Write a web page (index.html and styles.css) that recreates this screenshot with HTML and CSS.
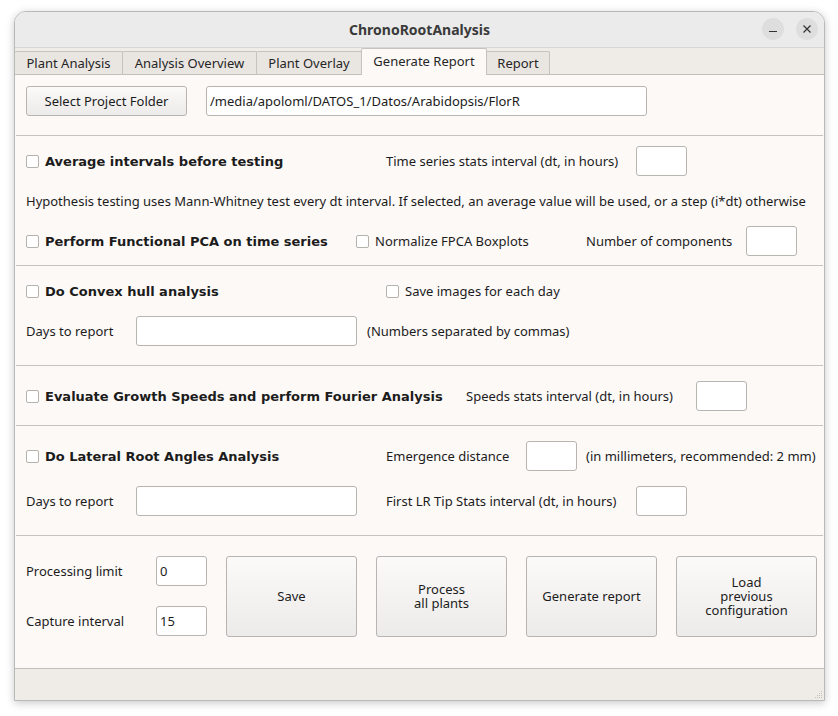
FILE: index.html
```html
<!DOCTYPE html>
<html>
<head>
<meta charset="utf-8">
<link rel="stylesheet" href="styles.css">
</head>
<body>
<div class="window">
  <div class="titlebar">
    <span class="title">ChronoRootAnalysis</span>
    <div class="wbtns">
      <span class="wbtn"><svg width="10" height="10" viewBox="0 0 10 10"><path d="M1 7.5h8" stroke="#333" stroke-width="1.2"/></svg></span>
      <span class="wbtn"><svg width="10" height="10" viewBox="0 0 10 10"><path d="M1.5 1.5l7 7M8.5 1.5l-7 7" stroke="#333" stroke-width="1.2"/></svg></span>
    </div>
  </div>
  <div class="tabbar">
    <span class="tab t1">Plant Analysis</span>
    <span class="tab t2">Analysis Overview</span>
    <span class="tab t3">Plant Overlay</span>
    <span class="tab active t4">Generate Report</span>
    <span class="tab t5">Report</span>
  </div>
  <div class="pane">
    <div class="sec s1">
      <div class="row">
        <button class="btn folder">Select Project Folder</button>
        <div class="input path">/media/apoloml/DATOS_1/Datos/Arabidopsis/FlorR</div>
      </div>
    </div>
    <div class="hr"></div>
    <div class="sec s2">
      <div class="row">
        <label class="chk w360"><span class="box"></span><b>Average intervals before testing</b></label>
        <span class="lbl w250">Time series stats interval (dt, in hours)</span>
        <div class="input small"></div>
      </div>
      <div class="row">
        <span class="lbl">Hypothesis testing uses Mann-Whitney test every dt interval. If selected, an average value will be used, or a step (i*dt) otherwise</span>
      </div>
      <div class="row">
        <label class="chk w330"><span class="box"></span><b>Perform Functional PCA on time series</b></label>
        <label class="chk w230"><span class="box"></span><span>Normalize FPCA Boxplots</span></label>
        <span class="lbl w160">Number of components</span>
        <div class="input small"></div>
      </div>
    </div>
    <div class="hr"></div>
    <div class="sec s3">
      <div class="row">
        <label class="chk w360"><span class="box"></span><b>Do Convex hull analysis</b></label>
        <label class="chk"><span class="box"></span><span>Save images for each day</span></label>
      </div>
      <div class="row">
        <span class="lbl w110">Days to report</span>
        <div class="input wide"></div>
        <span class="lbl ml10">(Numbers separated by commas)</span>
      </div>
    </div>
    <div class="hr"></div>
    <div class="sec s4">
      <div class="row">
        <label class="chk w440"><span class="box"></span><b>Evaluate Growth Speeds and perform Fourier Analysis</b></label>
        <span class="lbl w230">Speeds stats interval (dt, in hours)</span>
        <div class="input small"></div>
      </div>
    </div>
    <div class="hr"></div>
    <div class="sec s5">
      <div class="row">
        <label class="chk w360"><span class="box"></span><b>Do Lateral Root Angles Analysis</b></label>
        <span class="lbl w140">Emergence distance</span>
        <div class="input small"></div>
        <span class="lbl ml9">(in millimeters, recommended: 2 mm)</span>
      </div>
      <div class="row">
        <span class="lbl w110">Days to report</span>
        <div class="input wide"></div>
        <span class="lbl w250 ml29">First LR Tip Stats interval (dt, in hours)</span>
        <div class="input small"></div>
      </div>
    </div>
    <div class="hr"></div>
    <div class="sec s6">
      <div class="limits">
        <div class="row">
          <span class="lbl w130">Processing limit</span>
          <div class="input small val">0</div>
        </div>
        <div class="row">
          <span class="lbl w130">Capture interval</span>
          <div class="input small val">15</div>
        </div>
      </div>
      <button class="btn big"><span class="bl">Save</span></button>
      <button class="btn big"><span class="bl">Process</span><span class="bl">all plants</span></button>
      <button class="btn big"><span class="bl">Generate report</span></button>
      <button class="btn big last"><span class="bl">Load</span><span class="bl">previous</span><span class="bl">configuration</span></button>
    </div>
  </div>
  <div class="statusbar">
    <svg class="grip" width="10" height="10" viewBox="0 0 10 10" fill="#c4c0bc">
      <rect x="8" y="2" width="1" height="1"/><rect x="6" y="4" width="1" height="1"/><rect x="8" y="4" width="1" height="1"/>
      <rect x="4" y="6" width="1" height="1"/><rect x="6" y="6" width="1" height="1"/><rect x="8" y="6" width="1" height="1"/>
      <rect x="2" y="8" width="1" height="1"/><rect x="4" y="8" width="1" height="1"/><rect x="6" y="8" width="1" height="1"/><rect x="8" y="8" width="1" height="1"/>
    </svg>
  </div>
</div>
</body>
</html>
```

FILE: styles.css
```css
* { box-sizing: border-box; }
html, body { margin: 0; padding: 0; background: #ffffff; }
body {
  font-family: "Noto Sans", "DejaVu Sans", sans-serif;
  font-size: 13px;
  color: #1c1c1c;
  width: 838px;
  height: 716px;
  overflow: hidden;
}
.window {
  margin: 11px 0 0 14px;
  width: 811px;
  height: 690px;
  border: 1px solid #b9b9b9;
  border-radius: 12px 12px 0 0;
  box-shadow: 0 2px 8px rgba(0,0,0,0.22);
  overflow: hidden;
  display: flex;
  flex-direction: column;
  background: #fcf9f7;
}
.titlebar {
  height: 36px;
  flex: none;
  background: #ebebeb;
  border-bottom: 1px solid #d6d6d6;
  display: flex;
  align-items: center;
  justify-content: center;
  position: relative;
}
.title {
  font-weight: 700;
  font-size: 14px;
  color: #3a3a3a;
}
.wbtns {
  position: absolute;
  right: 6px;
  top: 6px;
  display: flex;
  gap: 12px;
}
.wbtn {
  width: 22px;
  height: 22px;
  border-radius: 50%;
  background: #dedede;
  display: flex;
  align-items: center;
  justify-content: center;
}
.tabbar {
  height: 27px;
  flex: none;
  background: #efebe7;
  display: flex;
  align-items: flex-end;
  border-bottom: 1px solid #c3bfbb;
  position: relative;
}
.tab {
  height: 23px;
  background: #e9e5e1;
  border: 1px solid #c6c2be;
  border-bottom: none;
  border-radius: 2px 2px 0 0;
  display: flex;
  align-items: center;
  justify-content: center;
  color: #262626;
  margin-right: -1px;
}
.t1 { width: 109px; margin-left: -1px; }
.t2 { width: 135px; }
.t3 { width: 106px; }
.t4 { width: 126px; }
.t5 { width: 64px; }
.tab.active {
  height: 27px;
  background: #fcf9f7;
  margin-bottom: -1px;
  padding-bottom: 2px;
  position: relative;
  z-index: 1;
}
.pane {
  flex: 1;
  background: #fcf9f7;
  display: flex;
  flex-direction: column;
}
.hr {
  height: 1px;
  background: #c6c2be;
  margin: 0 1px;
  flex: none;
}
.sec { padding: 0 0 0 11px; display: flex; flex-direction: column; gap: 10px; }
.s1 { padding-top: 11px; padding-bottom: 19px; }
.s2 { padding-top: 10px; padding-bottom: 9px; }
.s3 { padding-top: 10px; padding-bottom: 19px; }
.s4 { padding-top: 15px; padding-bottom: 14px; }
.s5 { padding-top: 15px; padding-bottom: 19px; gap: 15px; }
.s6 { padding-top: 20px; flex-direction: row; gap: 19px; align-items: flex-start; }
.limits { display: flex; flex-direction: column; gap: 20px; }
.row {
  display: flex;
  align-items: center;
  height: 30px;
  flex: none;
}
.lbl { white-space: nowrap; flex: none; }
.chk { display: flex; align-items: center; white-space: nowrap; flex: none; }
.chk b { font-family: "DejaVu Sans", sans-serif; font-weight: 700; font-size: 13px; }
.box {
  width: 13px;
  height: 13px;
  border: 1px solid #b5b1ad;
  border-radius: 2px;
  background: #ffffff;
  margin-right: 6px;
  flex: none;
}
.w110 { width: 110px; }
.w130 { width: 130px; }
.w140 { width: 140px; }
.w160 { width: 160px; }
.w230 { width: 230px; }
.w250 { width: 250px; }
.w330 { width: 330px; }
.w360 { width: 360px; }
.w440 { width: 440px; }
.ml9 { margin-left: 9px; }
.ml10 { margin-left: 10px; }
.ml29 { margin-left: 29px; }
.input {
  height: 30px;
  background: #ffffff;
  border: 1px solid #b8b4b0;
  border-radius: 3px;
  flex: none;
  display: flex;
  align-items: center;
  padding-left: 3px;
  white-space: nowrap;
}
.input.small { width: 51px; }
.input.wide { width: 221px; }
.input.path { width: 441px; margin-left: 19px; }
.btn {
  font-family: "Noto Sans", "DejaVu Sans", sans-serif;
  font-size: 13px;
  color: #1c1c1c;
  background: linear-gradient(#fbfaf9, #ecebea);
  border: 1px solid #b8b4b0;
  border-radius: 3px;
  padding: 0;
  flex: none;
}
.btn.big {
  width: 131px;
  height: 81px;
  display: flex;
  flex-direction: column;
  align-items: center;
  justify-content: center;
  padding-bottom: 2px;
}
.bl { display: block; height: 14px; line-height: 14px; }
.btn.folder { width: 161px; height: 30px; }
.btn.big.last { width: 141px; }
.statusbar {
  height: 32px;
  flex: none;
  background: #efece8;
  border-top: 1px solid #c3bfbb;
  display: flex;
  align-items: flex-end;
  justify-content: flex-end;
}
.grip { margin: 0 1px 1px 0; }
```
